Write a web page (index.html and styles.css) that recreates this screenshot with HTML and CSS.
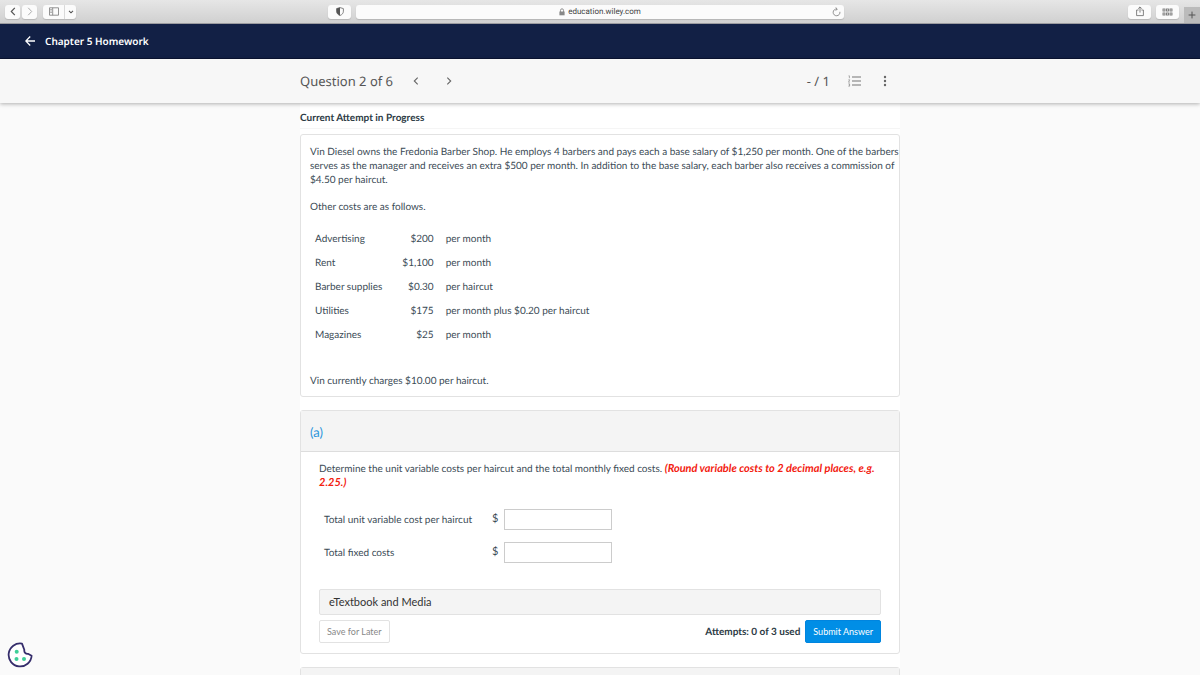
FILE: index.html
```html
<!DOCTYPE html>
<html lang="en">
<head>
<meta charset="utf-8">
<meta name="viewport" content="width=device-width, initial-scale=1">
<title>Chapter 5 Homework</title>
<link rel="stylesheet" href="styles.css">
</head>
<body>
<div class="app">
  <header class="browser">
    <div class="browser-left">
      <div class="history">
        <button class="tool tool-small" aria-label="Back"><svg width="6" height="9" viewBox="0 0 6 9"><path d="M4.8.8 1.3 4.5l3.5 3.7" stroke="#555" stroke-width="1.2"/></svg></button>
        <button class="tool tool-small" aria-label="Forward"><svg width="6" height="9" viewBox="0 0 6 9"><path d="m1.2.8 3.5 3.7-3.5 3.7" stroke="#aaa"/></svg></button>
      </div>
      <div class="split">
        <button class="tool tool-side" aria-label="Sidebar"><svg width="10" height="9" viewBox="0 0 10 9"><path d="M.5.8h9v7.4h-9zM3.7.8v7.4M1.4 2.5h1.3M1.4 4h1.3M1.4 5.5h1.3" stroke="#777" stroke-width=".8"/></svg></button>
        <button class="tool tool-menu" aria-label="Tab groups"><svg width="6" height="4" viewBox="0 0 6 4"><path d="m1 .8 2 2 2-2" stroke="#555" stroke-width="1.1"/></svg></button>
      </div>
      <button class="tool shield" aria-label="Privacy report"><svg width="8" height="9" viewBox="0 0 8 9"><path d="M4 .6 7.4 1.6v2.6c0 2-1.2 3.4-3.4 4.3C1.8 7.6.6 6.2.6 4.2V1.6z" stroke="#666" stroke-width=".8"/><path d="M4 .6.6 1.6v2.6c0 2 1.2 3.4 3.4 4.3z" fill="#555"/></svg></button>
    </div>
    <div class="address">
      <span class="site"><svg width="6" height="8" viewBox="0 0 6 8"><path d="M1.5 4V2.3a1.5 1.5 0 0 1 3 0V4" stroke="#888" stroke-width=".9"/><path d="M.4 3.5h5.2v3.8H.4z" fill="#888"/></svg><span>education.wiley.com</span></span>
      <button class="reload" aria-label="Reload"><svg width="9" height="10" viewBox="0 0 9 10"><path d="M7.9 4.8A3.400 3.400 0 1 1 5 2M3.600.4 5.300 2 3.700 3.700" stroke="#777" stroke-width=".8"/></svg></button>
    </div>
    <div class="browser-right">
      <button class="tool" aria-label="Share"><svg width="8" height="11" viewBox="0 0 8 11"><path d="M2.6 4H.6v5.6h6.8V4h-2M4 6.6V1M2.2 2.7 4 .9l1.8 1.8" stroke="#666" stroke-width=".8"/></svg></button>
      <button class="tool" aria-label="Show all tabs"><svg width="11" height="8" viewBox="0 0 11 8"><g stroke="#777" stroke-width=".9"><rect x="1" y="1" width="2" height="2"/><rect x="4.5" y="1" width="2" height="2"/><rect x="8" y="1" width="2" height="2"/><rect x="1" y="5" width="2" height="2"/><rect x="4.5" y="5" width="2" height="2"/><rect x="8" y="5" width="2" height="2"/></g></svg></button>
      <button class="new-tab" aria-label="New tab"><svg width="8" height="8" viewBox="0 0 8 8"><path d="M4 .6v6.800M.6 4h6.800" stroke="#555"/></svg></button>
    </div>
  </header>

  <div class="titlebar">
    <a class="back" href="#" aria-label="Back to course"><svg width="10" height="10" viewBox="0 0 10 10"><path d="M5.200.5.8 5l4.400 4.500M.8 5h9.200" stroke="#fff" stroke-width="1.300"/></svg></a>
    <h1 class="title">Chapter 5 Homework</h1>
  </div>

  <nav class="question-bar">
    <div class="question-inner">
      <h2 class="question-name">Question 2 of 6</h2>
      <div class="pager">
        <button class="icon-button" aria-label="Previous question"><svg width="6" height="8" viewBox="0 0 6 8"><path d="M4.700.7 1.300 4l3.400 3.300" stroke="#666" stroke-width="1.100"/></svg></button>
        <button class="icon-button" aria-label="Next question"><svg width="6" height="8" viewBox="0 0 6 8"><path d="M1.300.7 4.700 4 1.300 7.300" stroke="#666" stroke-width="1.100"/></svg></button>
      </div>
      <span class="score">- / 1</span>
      <button class="icon-button" aria-label="Question list"><svg width="13" height="12" viewBox="0 0 13 12"><path d="M4 2h9M4 6h9M4 10h9" stroke="#777" stroke-width="1.200"/><path d="M.6.8h.8v2.400M.4 4.800h1.300L.5 7.200h1.300M.4 8.800h1.200v2.400H.4M.8 10h.8" stroke="#777" stroke-width=".6"/></svg></button>
      <button class="icon-button" aria-label="More options"><svg width="4" height="12" viewBox="0 0 4 12"><g fill="#666"><circle cx="2" cy="2" r="1.200"/><circle cx="2" cy="6" r="1.200"/><circle cx="2" cy="10" r="1.200"/></g></svg></button>
    </div>
  </nav>

  <main class="scroll">
    <div class="content">
      <h3 class="attempt">Current Attempt in Progress</h3>

      <section class="card problem">
        <p>Vin Diesel owns the Fredonia Barber Shop. He employs 4 barbers and pays each a base salary of $1,250 per month. One of the barbers serves as the manager and receives an extra $500 per month. In addition to the base salary, each barber also receives a commission of $4.50 per haircut.</p>
        <p>Other costs are as follows.</p>
        <table class="costs">
          <tbody>
            <tr><th scope="row">Advertising</th><td class="amount">$200</td><td>per month</td></tr>
            <tr><th scope="row">Rent</th><td class="amount">$1,100</td><td>per month</td></tr>
            <tr><th scope="row">Barber supplies</th><td class="amount">$0.30</td><td>per haircut</td></tr>
            <tr><th scope="row">Utilities</th><td class="amount">$175</td><td>per month plus $0.20 per haircut</td></tr>
            <tr><th scope="row">Magazines</th><td class="amount">$25</td><td>per month</td></tr>
          </tbody>
        </table>
        <p>Vin currently charges $10.00 per haircut.</p>
      </section>

      <section class="card">
        <h3 class="part">(a)</h3>
        <form class="answer">
          <p>Determine the unit variable costs per haircut and the total monthly fixed costs. <strong class="hint">(Round variable costs to 2 decimal places, e.g. 2.25.)</strong></p>
          <div class="fields">
            <label for="variable">Total unit variable cost per haircut</label><span class="dollar">$</span><input id="variable" type="text">
            <label for="fixed">Total fixed costs</label><span class="dollar">$</span><input id="fixed" type="text">
          </div>
          <button type="button" class="media">eTextbook and Media</button>
          <div class="actions">
            <button type="button" class="save">Save for Later</button>
            <span class="used">Attempts: 0 of 3 used</span>
            <button type="button" class="submit">Submit Answer</button>
          </div>
        </form>
      </section>

      <section class="card"><div class="part"></div></section>
    </div>
  </main>

  <button class="cookie" aria-label="Cookie preferences"><svg width="26" height="26" viewBox="0 0 26 26"><path d="M15 1.600A11.500 11.500 0 1 0 24.600 13.700L21 11.800C18.500 12 17 10.500 17.300 7.800Z" fill="#fff" stroke="#352d6b" stroke-width="1.800" stroke-linejoin="round"/><g fill="#3ecf98"><circle cx="9.700" cy="9.700" r="2"/><circle cx="9.500" cy="17" r="2"/><circle cx="17" cy="17" r="2"/></g></svg></button>
</div>
</body>
</html>
```
FILE: styles.css
```css
* { box-sizing: border-box; }

body {
  margin: 0;
  background: #fafafa;
  color: #3b4b56;
  font: 10px/14px Lato, sans-serif;
  text-rendering: geometricPrecision;
}

h1, h2, h3, p { margin: 0; }

button {
  display: flex;
  align-items: center;
  justify-content: center;
  border: 0;
  padding: 0;
  background: none;
  color: inherit;
  font: inherit;
}

svg { display: block; fill: none; }

.app {
  display: flex;
  flex-direction: column;
  height: 100vh;
  overflow: hidden;
}

.browser {
  display: grid;
  grid-template-columns: 1fr minmax(0, 488px) 1fr;
  flex: none;
  height: 24px;
  border-bottom: 1px solid #9b9b9f;
  background: linear-gradient(#e6e6e6, #d0d0d0);
}

.browser-left {
  display: flex;
  align-items: center;
  padding: 0 5px;
}

.history, .split { display: flex; }
.history { gap: 2px; margin-right: 6px; }

.tool {
  width: 23px;
  height: 14px;
  border-radius: 3px;
  background: #fbfbfb;
  box-shadow: 0 1px 1px #b5b5b5;
}

.tool-small { width: 15px; }
.tool-side { width: 22px; border-right: 1px solid #ddd; border-radius: 3px 0 0 3px; }
.tool-menu { width: 11px; border-radius: 0 3px 3px 0; }
.shield { margin-left: auto; }

.address {
  display: flex;
  align-items: center;
  align-self: center;
  height: 14px;
  padding: 0 3px 0 12px;
  border-radius: 3px;
  background: #fbfbfb;
  box-shadow: 0 1px 1px #b5b5b5;
}

.site {
  display: flex;
  flex: 1;
  align-items: center;
  justify-content: center;
  gap: 3px;
  color: #444;
  font: 8px/12px Roboto, sans-serif;
}

.browser-right {
  display: flex;
  align-items: center;
  justify-content: flex-end;
  gap: 5px;
}

.new-tab {
  align-self: flex-end;
  width: 16px;
  height: 16px;
  background: #bbb;
}

.titlebar {
  display: flex;
  flex: none;
  align-items: center;
  gap: 10px;
  height: 35px;
  padding: 0 25px;
  border-bottom: 1px solid #0a1433;
  background: #122045;
  color: #fff;
}

.title { font: 600 10px/14px "Noto Sans", sans-serif; }

.question-bar {
  position: relative;
  flex: none;
  background: #f7f7f7;
  box-shadow: 0 1px 4px rgba(0, 0, 0, .3);
}

.question-inner {
  display: flex;
  align-items: center;
  width: 100%;
  max-width: 600px;
  height: 44px;
  margin: 0 auto;
  padding-right: 13px;
  color: #555;
  font: 13px/18px "Noto Sans", sans-serif;
}

.question-name { font: inherit; }
.pager { display: flex; gap: 27px; margin-left: 20px; }
.score { margin: 0 18px 0 auto; }
.score + .icon-button { margin-right: 22px; }

.scroll { flex: 1; min-height: 0; overflow: hidden; }

.content {
  display: flex;
  flex-direction: column;
  gap: 13px;
  width: 100%;
  max-width: 600px;
  margin: 0 auto;
  background: #fff;
}

.attempt {
  margin-bottom: -8px;
  padding: 8px 0 3px;
  border-bottom: 1px solid #f5f5f5;
  font: bold 10px/14px Lato, sans-serif;
  color: #2d3b45;
}

.card {
  border: 1px solid #e2e2e2;
  border-radius: 3px;
}

.problem {
  display: flex;
  flex-direction: column;
  gap: 13px;
  padding: 10px 0 8px 9px;
}

.costs {
  align-self: flex-start;
  margin-bottom: 14px;
  border-collapse: collapse;
}

.costs th, .costs td { padding: 5px 6px; font-weight: normal; text-align: left; }
.costs th { padding-left: 5px; padding-right: 14px; }
.costs td.amount { text-align: right; }

.part {
  height: 41px;
  padding: 13px 9px;
  border-bottom: 1px solid #ddd;
  background: #f4f4f4;
  color: #2b95dc;
  font: 13px/16px Lato, sans-serif;
}

.answer { padding: 10px 18px; }
.hint { color: #f3200f; font-size: 11px; font-style: italic; }

.fields {
  display: grid;
  grid-template-columns: auto auto auto;
  align-items: center;
  justify-content: start;
  gap: 12px 0;
  margin: 19px 0 26px 5px;
}

.dollar { margin: 0 6px 2px 20px; font-size: 11px; }

.fields input {
  width: 108px;
  height: 21px;
  border: 1px solid #ccc;
  padding: 0 5px;
  background: #fff;
  font: inherit;
}

.media {
  justify-content: flex-start;
  width: 100%;
  height: 26px;
  padding: 0 9px;
  border: 1px solid #e2e2e2;
  border-radius: 2px;
  background: #f4f4f4;
  color: #333;
  font-size: 11px;
}

.actions { display: flex; align-items: center; margin-top: 5px; }

.save, .submit {
  height: 23px;
  padding: 0 7px;
  border: 1px solid #e2e2e2;
  border-radius: 2px;
  font-size: 9px;
}

.save { color: #888; }
.submit { border-color: #0085df; background: #008ee6; color: #fff; }

.used {
  margin: 0 5px 0 auto;
  color: #2d3b45;
  font-size: 10px;
  font-weight: bold;
}

.cookie { position: absolute; bottom: 7px; left: 7px; }
```
